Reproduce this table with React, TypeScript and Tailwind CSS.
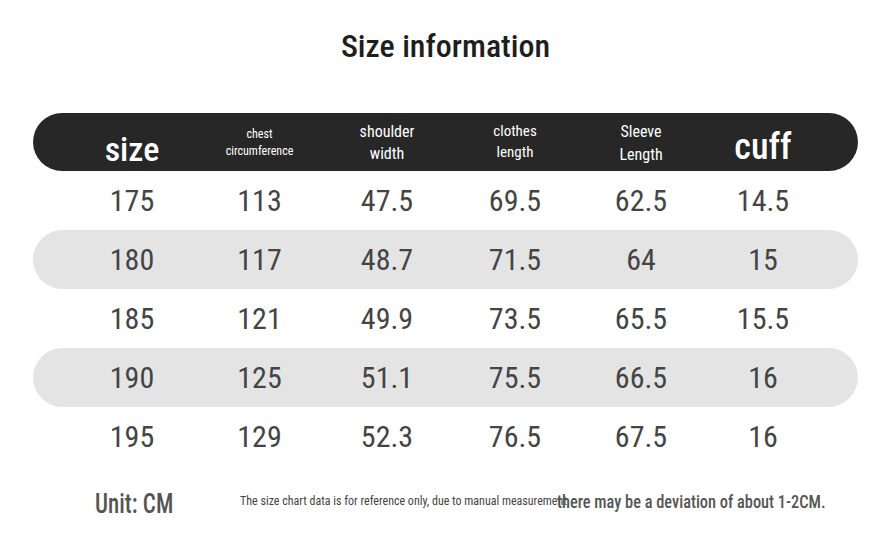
import React from "react";

const rows = [
  ["175", "113", "47.5", "69.5", "62.5", "14.5"],
  ["180", "117", "48.7", "71.5", "64", "15"],
  ["185", "121", "49.9", "73.5", "65.5", "15.5"],
  ["190", "125", "51.1", "75.5", "66.5", "16"],
  ["195", "129", "52.3", "76.5", "67.5", "16"],
];

const cols = "grid grid-cols-[128px_127px_128px_128px_124px_120px] pl-[35px] items-center";

export default function App() {
  return (
    <div className="w-[891px] h-[550px] bg-white overflow-hidden font-['Roboto_Condensed',sans-serif]">
      <div className="pt-[27px] h-[113px] text-center text-[32px] leading-[38px] text-[#1e1e1e] font-medium">
        Size information
      </div>
      <div className="mx-[33px] w-[825px]">
        <div className={`${cols} h-[58px] rounded-full bg-[#272727] text-white text-center`}>
          <div className="text-[34px] leading-none font-medium pt-[14px]">size</div>
          <div className="text-[12px] leading-[17px] pt-[2px]">chest<br />circumference</div>
          <div className="text-[16px] leading-[22px] pt-[1px]">shoulder<br />width</div>
          <div className="text-[15px] leading-[21px]">clothes<br />length</div>
          <div className="text-[16px] leading-[23px] pt-[2px]">Sleeve<br />Length</div>
          <div className="text-[36px] leading-none font-medium pt-[10px]">cuff</div>
        </div>
        {rows.map((r, i) => (
          <div
            key={i}
            className={`${cols} h-[59px] rounded-full text-center text-[30px] text-[#444] ${i % 2 === 1 ? "bg-[#e4e4e4]" : ""}`}
          >
            {r.map((c, j) => (
              <div key={j}>{c}</div>
            ))}
          </div>
        ))}
      </div>
      <div className="flex items-center mt-[17px] h-[40px]">
        <div className="ml-[95px] w-[145px] pt-[2px]">
          <div className="inline-block text-[27px] font-medium text-[#555] scale-x-[0.85] origin-left whitespace-nowrap">
            Unit: CM
          </div>
        </div>
        <div className="text-[12px] text-[#444] whitespace-nowrap w-[317px] mb-[4px]">
          The size chart data is for reference only, due to manual measurement,
        </div>
        <div className="inline-block text-[18px] font-medium text-[#555] whitespace-nowrap mb-[4px] scale-x-[0.91] origin-left">
          there may be a deviation of about 1-2CM.
        </div>
      </div>
    </div>
  );
}
